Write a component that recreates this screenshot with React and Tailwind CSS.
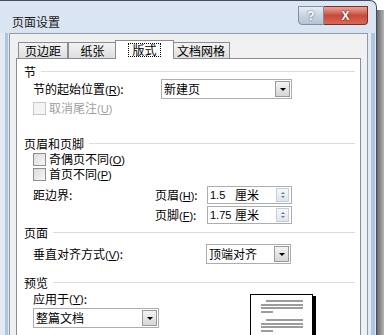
function Acc({ k }) {
  return (
    <span className="font-['Liberation_Sans',sans-serif] text-[11px]">
      (<span className="underline underline-offset-1">{k}</span>)
    </span>
  );
}

function Header({ title, className = "" }) {
  return (
    <div className={"flex h-[14px] items-center pl-[7px] pr-[5px] " + className}>
      <span>{title}</span>
      <div className="ml-[5px] h-[2px] flex-1 border-t border-b border-t-[#d5dfe5] border-b-white" />
    </div>
  );
}

function Arrow() {
  return (
    <div className="h-0 w-0 border-l-[3px] border-r-[3px] border-t-[3px] border-l-transparent border-r-transparent border-t-black" />
  );
}

function Select({ text, w }) {
  return (
    <div className={"flex h-[20px] items-center border border-[#abadb3] bg-white " + w}>
      <span className="flex-1 pl-[2px] leading-none">{text}</span>
      <div className="mr-px flex h-[16px] w-[15px] items-center justify-center border border-[#9a9a9a] bg-gradient-to-b from-[#f4f4f4] to-[#d6d6d6]">
        <Arrow />
      </div>
    </div>
  );
}

function Spin({ num, unit }) {
  return (
    <div className="flex h-[18px] w-[85px] items-center border border-[#abadb3] bg-white">
      <span className="flex flex-1 items-center pl-[2px] leading-none">
        <span className="w-[25px] font-['Liberation_Sans',sans-serif] text-[11px]">{num}</span>
        <span>{unit}</span>
      </span>
      <div className="mr-[2px] flex h-[14px] w-[13px] flex-col items-center justify-center gap-[2px] border border-[#c5cfdb] bg-gradient-to-b from-[#f5f8fb] to-[#dde5ee]">
        <div className="h-0 w-0 border-l-[2px] border-r-[2px] border-b-[2px] border-l-transparent border-r-transparent border-b-[#6d7c8e]" />
        <div className="h-0 w-0 border-l-[2px] border-r-[2px] border-t-[2px] border-l-transparent border-r-transparent border-t-[#6d7c8e]" />
      </div>
    </div>
  );
}

function Check({ label, k, disabled }) {
  return (
    <div className={"flex h-[13px] items-center gap-[3px] pl-[16px] leading-[13px] " + (disabled ? "text-[#a0a0a0]" : "")}>
      <div
        className={
          "h-[13px] w-[13px] shrink-0 border " +
          (disabled
            ? "border-[#c8c8c8] bg-[#f4f4f4]"
            : "border-[#8f8f8f] bg-gradient-to-br from-[#dcdcdc] to-[#f7f7f7]")
        }
      />
      <span className="leading-[13px]">
        {label}
        <Acc k={k} />
      </span>
    </div>
  );
}

function Tab({ label, w, active }) {
  if (active) {
    return (
      <div className={"relative z-10 -mx-[2px] -mb-px flex h-[19px] items-center justify-center border border-b-0 border-[#898c95] bg-white " + w}>
        <span className="border border-dotted border-black px-[3px] leading-[12px]">{label}</span>
      </div>
    );
  }
  return (
    <div className={"flex h-[16px] items-center justify-center border border-b-0 border-[#898c95] bg-gradient-to-b from-[#f3f3f3] to-[#dedede] " + w}>
      {label}
    </div>
  );
}

function PagePreview() {
  const lines = [
    [300, 265], [304, 260], [307, 260], [311, 260, 272],
    [319, 265], [323, 260], [326, 260], [330, 260, 272],
  ];
  return (
    <div className="mt-[4px] h-[60px] w-[63px] border border-black bg-white shadow-[3px_2px_0_#000]">
      <svg width="61" height="58" viewBox="250 294 61 58">
        {lines.map(([y, x1, x2], i) => (
          <line key={i} x1={x1} x2={x2 || 302} y1={y} y2={y} stroke="#3a3a3a" strokeWidth="1.2" />
        ))}
      </svg>
    </div>
  );
}

export default function App() {
  return (
    <div className="flex h-[335px] w-[384px] overflow-hidden bg-white font-['Noto_Sans_CJK_SC','Liberation_Sans',sans-serif] text-[12px] text-black">
      <div className="flex h-[335px] w-[377px] shrink-0 flex-col overflow-hidden rounded-tr-[7px] border-r border-t border-[#3e4e60] bg-gradient-to-b from-[#dbe6f2] via-[#cfdeee] to-[#c8d9eb]">
        {/* title bar */}
        <div className="flex h-[32px] shrink-0 items-start justify-between">
          <div className="ml-[12px] mt-[13px] leading-[16px] text-[#1a1a1a]">页面设置</div>
          <div className="mr-[8px] mt-[5px] flex">
            <div className="flex h-[19px] w-[26px] items-center justify-center rounded-bl-[4px] border border-[#7f8fa3] bg-gradient-to-b from-[#e6ecf3] via-[#c9d4e1] to-[#b5c3d4] font-['Liberation_Sans',sans-serif] text-[12px] font-bold text-white [text-shadow:0_0_2px_#3b4a5c]">
              ?
            </div>
            <div className="flex h-[19px] w-[44px] items-center justify-center rounded-br-[4px] border border-l-0 border-[#7d2e26] bg-gradient-to-b from-[#e8a598] via-[#c9483a] to-[#d66a58] font-['Liberation_Sans',sans-serif] text-[12px] font-bold text-white [text-shadow:0_0_2px_#4a1010]">
              X
            </div>
          </div>
        </div>
        {/* body with frames */}
        <div className="flex min-h-0 flex-1">
          <div className="flex w-[9px] shrink-0">
            <div className="w-[5px] bg-[#e2eaf3]" />
            <div className="w-[3px] bg-[#aec6df]" />
            <div className="w-px bg-[#dfe7f0]" />
          </div>
          <div className="flex flex-1 flex-col border-l border-t border-r border-[#8d9bab] bg-[#f0f0f0] pl-[6px] pr-[6px] pt-[6px]">
            <div className="flex h-[18px] shrink-0 items-end pl-[2px]">
              <Tab label="页边距" w="w-[50px]" />
              <Tab label="纸张" w="w-[49px]" />
              <Tab label="版式" w="w-[59px]" active />
              <Tab label="文档网格" w="w-[58px]" />
            </div>
            <div className="flex-1 shrink-0 border border-b-0 border-[#898c95] bg-white pt-[6px]">
              <Header title="节" />
              <div className="flex h-[20px] items-center pl-[16px]">
                <span className="w-[128px]">
                  节的起始位置<Acc k="R" />:
                </span>
                <Select text="新建页" w="w-[131px]" />
              </div>
              <div className="mt-[2px] flex h-[14px] items-center">
                <Check label="取消尾注" k="U" disabled />
              </div>

              <Header title="页眉和页脚" className="mt-[22px]" />
              <div className="mt-[2px]">
                <Check label="奇偶页不同" k="O" />
              </div>
              <div className="mt-[2px]">
                <Check label="首页不同" k="P" />
              </div>
              <div className="mt-[5px] flex h-[18px] items-center pl-[16px]">
                <span className="w-[122px]">距边界:</span>
                <span className="w-[52px]">
                  页眉<Acc k="H" />:
                </span>
                <Spin num="1.5" unit="厘米" />
              </div>
              <div className="mt-[2px] flex h-[18px] items-center pl-[16px]">
                <span className="w-[122px]" />
                <span className="w-[52px]">
                  页脚<Acc k="F" />:
                </span>
                <Spin num="1.75" unit="厘米" />
              </div>

              <Header title="页面" className="mt-[2px]" />
              <div className="mt-[4px] flex h-[20px] items-center pl-[16px]">
                <span className="w-[173px]">
                  垂直对齐方式<Acc k="V" />:
                </span>
                <Select text="顶端对齐" w="w-[85px]" />
              </div>

              <Header title="预览" className="mt-[12px]" />
              <div className="flex items-start pl-[16px]">
                <div className="flex flex-col">
                  <div className="mt-[2px] flex h-[14px] items-center">
                    应用于<Acc k="Y" />:
                  </div>
                  <div className="mt-[2px]">
                    <Select text="整篇文档" w="w-[126px]" />
                  </div>
                </div>
                <div className="ml-[91px]">
                  <PagePreview />
                </div>
              </div>
            </div>
          </div>
          <div className="flex w-[8px] shrink-0">
            <div className="w-[3px] bg-[#e4ebf3]" />
            <div className="w-[4px] bg-[#aec7e1]" />
            <div className="w-px bg-[#dde6ef]" />
          </div>
        </div>
      </div>
      <div className="mt-[10px] w-[7px] bg-gradient-to-r from-[#6a6a6a] to-[#b5b5b5]" />
    </div>
  );
}
